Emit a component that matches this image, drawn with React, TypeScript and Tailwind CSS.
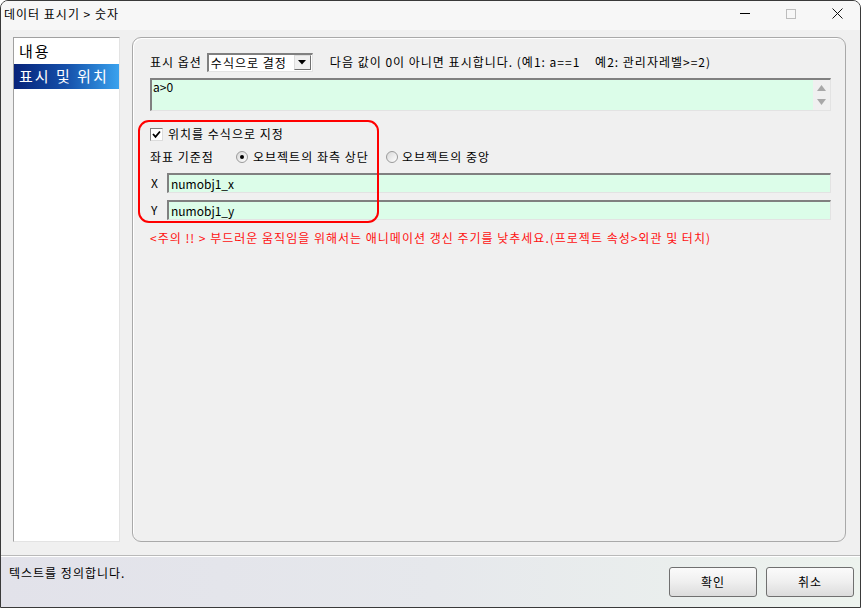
import React from "react"

const font = { fontFamily: '"Noto Sans CJK KR", "Noto Sans", sans-serif' }

function Sunken({ className = "", children }: { className?: string; children?: React.ReactNode }) {
  return (
    <div className={`border-t-2 border-l-2 border-t-[#808080] border-l-[#808080] border-b border-r border-b-[#e3e3e3] border-r-[#e3e3e3] ${className}`}>
      {children}
    </div>
  )
}

function Radio({ checked }: { checked?: boolean }) {
  return (
    <span className="flex h-[12px] w-[12px] shrink-0 items-center justify-center rounded-full border border-[#9a9a9a] bg-gradient-to-br from-[#d8d8d8] to-white">
      {checked && <span className="h-[4px] w-[4px] rounded-full bg-black" />}
    </span>
  )
}

export default function App() {
  return (
    <div className="flex h-[608px] w-[861px] flex-col overflow-hidden rounded-t-[8px] border border-[#3a3a3a] bg-[#f0f0f0] text-[12px] tracking-[1px] text-black" style={font}>
      {/* title bar */}
      <div className="flex h-[29px] shrink-0 items-center bg-[#f7f7f7] pl-[3px]">
        <span className="flex-1 pb-[4px]">데이터 표시기 &gt; 숫자</span>
        <div className="flex h-full items-center pb-[4px]">
          <span className="flex w-[46px] justify-center">
            <span className="h-px w-[10px] bg-black" />
          </span>
          <span className="flex w-[46px] justify-center">
            <span className="h-[10px] w-[10px] border border-[#bdbdbd]" />
          </span>
          <span className="flex w-[46px] justify-center">
            <svg width="11" height="11" viewBox="0 0 11 11">
              <path d="M0.5 0.5 L10.5 10.5 M10.5 0.5 L0.5 10.5" stroke="#111" strokeWidth="1" />
            </svg>
          </span>
        </div>
      </div>

      {/* body */}
      <div className="flex flex-1 gap-[12px] pl-[12px] pr-[14px] pt-[7px] pb-[13px]">
        <div className="flex w-[107px] flex-col border-t border-l border-[#a0a0a0] border-b border-r border-b-[#e3e3e3] border-r-[#e3e3e3] bg-white text-[15px] tracking-[2px]">
          <div className="flex h-[26px] items-center pl-[5px]">내용</div>
          <div className="flex h-[25px] items-center bg-gradient-to-r from-[#08237a] via-[#1650aa] to-[#3aa2ee] pl-[5px] text-white">
            표시 및 위치
          </div>
        </div>

        <div className="relative flex-1 rounded-[9px] border border-[#a9a9a9] shadow-[inset_1px_1px_0_#ffffff]">
          <div className="flex flex-col pl-[17px] pr-[14px] pt-[15px]">
            <div className="flex h-[18px] items-center">
              <span>표시 옵션</span>
              <Sunken className="ml-[5px] flex h-[19px] w-[106px] shrink-0 items-center bg-white">
                <span className="flex-1 pl-[2px] leading-none">수식으로 결정</span>
                <span className="mr-px flex h-[15px] w-[17px] items-center justify-center border border-[#dcdcdc] border-b-[#707070] border-r-[#707070] bg-[#f0f0f0]">
                  <svg width="8" height="5" viewBox="0 0 8 5">
                    <path d="M0 0 L8 0 L4 4.5 Z" fill="#000" />
                  </svg>
                </span>
              </Sunken>
              <span className="ml-[17px] whitespace-nowrap">
                다음 값이 0이 아니면 표시합니다. (예1: a==1&nbsp;&nbsp;&nbsp;&nbsp;예2: 관리자레벨&gt;=2)
              </span>
            </div>

            <Sunken className="mt-[7px] flex h-[33px] bg-[#dcfde9]">
              <span className="flex-1 pl-[1px] leading-[14px] tracking-normal">a&gt;0</span>
              <span className="flex w-[17px] flex-col items-center justify-between bg-[#f0f0f0] py-[5px]">
                <svg width="9" height="6" viewBox="0 0 9 6">
                  <path d="M0 6 L9 6 L4.5 0 Z" fill="#a8a8a8" />
                </svg>
                <svg width="9" height="6" viewBox="0 0 9 6">
                  <path d="M0 0 L9 0 L4.5 6 Z" fill="#a8a8a8" />
                </svg>
              </span>
            </Sunken>

            <div className="mt-[14px] flex h-[18px] items-center">
              <span className="flex h-[13px] w-[13px] items-center justify-center border border-[#808080] border-b-[#dcdcdc] border-r-[#dcdcdc] bg-white">
                <svg width="9" height="9" viewBox="0 0 9 9">
                  <path d="M1 4 L3.5 6.8 L8 1.5" fill="none" stroke="#000" strokeWidth="1.8" />
                </svg>
              </span>
              <span className="ml-[5px]">위치를 수식으로 지정</span>
            </div>

            <div className="mt-[5px] flex h-[18px] items-center">
              <span className="w-[86px]">좌표 기준점</span>
              <Radio checked />
              <span className="ml-[5px] w-[133px]">오브젝트의 좌측 상단</span>
              <Radio />
              <span className="ml-[4px]">오브젝트의 중앙</span>
            </div>

            <div className="mt-[7px] flex h-[20px] items-center">
              <span className="w-[17px] pl-px">X</span>
              <Sunken className="flex h-[20px] flex-1 items-center bg-[#dcfde9] pl-[2px] tracking-normal">numobj1_x</Sunken>
            </div>
            <div className="mt-[7px] flex h-[20px] items-center">
              <span className="w-[17px] pl-px">Y</span>
              <Sunken className="flex h-[20px] flex-1 items-center bg-[#dcfde9] pl-[2px] tracking-normal">numobj1_y</Sunken>
            </div>

            <div className="mt-[9px] flex h-[18px] items-center whitespace-nowrap text-[#ff1010]">
              &lt;주의 !! &gt; 부드러운 움직임을 위해서는 애니메이션 갱신 주기를 낮추세요.(프로젝트 속성&gt;외관 및 터치)
            </div>
          </div>

          {/* red annotation box */}
          <div className="absolute left-[5px] top-[82px] h-[103px] w-[241px] rounded-[11px] border-[2.5px] border-[#ff0000]" />
        </div>
      </div>

      {/* status bar */}
      <div className="flex h-[52px] shrink-0 items-start border-t border-[#b9b9b9] bg-gradient-to-r from-[#e2e2ea] via-[#e6e8ec] to-[#edf3ee] shadow-[inset_0_1px_0_#ffffff]">
        <span className="flex-1 pl-[8px] pt-[8px]">텍스트를 정의합니다.</span>
        <div className="flex gap-[9px] pr-[6px] pt-[11px]">
          <button className="h-[30px] w-[88px] rounded-[3px] border border-[#707070] bg-gradient-to-b from-[#fbfbfb] via-[#efefef] to-[#dcdcdc]">확인</button>
          <button className="h-[30px] w-[88px] rounded-[3px] border border-[#707070] bg-gradient-to-b from-[#fbfbfb] via-[#efefef] to-[#dcdcdc]">취소</button>
        </div>
      </div>
    </div>
  )
}
